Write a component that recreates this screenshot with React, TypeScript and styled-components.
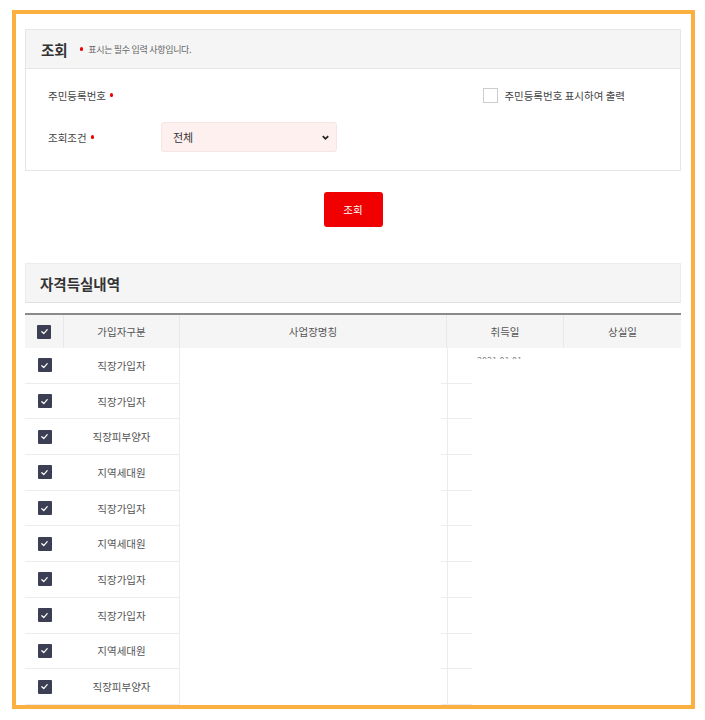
import styled, { createGlobalStyle } from 'styled-components';

const GlobalStyle = createGlobalStyle`
	html, body {
		margin: 0;
		padding: 0;
		background: #fff;
		font-family: "Noto Sans CJK KR", "Noto Sans", sans-serif;
		color: #333;
	}
`

const Frame = styled.div`
	box-sizing: border-box;
	margin: 10px 0 0 12px;
	width: 683px;
	height: 699px;
	border: 4px solid #fbb040;
	padding: 15px 10px 0 9px;
	overflow: hidden;
	background: #fff;
`

const Panel = styled.div`
	border: 1px solid #e6e6e6;
`

const PanelHead = styled.div`
	display: flex;
	align-items: center;
	height: 38px;
	padding: 0 15px;
	background: #f5f5f5;
	border-bottom: 1px solid #e6e6e6;
	gap: 12px;
`

const Title = styled.h2`
	margin: 0;
	font-size: 14.5px;
	font-weight: 700;
	color: #333;
`

const Note = styled.span`
	display: flex;
	align-items: center;
	gap: 5px;
	font-size: 9px;
	color: #666;
	letter-spacing: -0.3px;
`

const Dot = styled.i`
	display: inline-block;
	width: 3.5px;
	height: 3.5px;
	border-radius: 50%;
	background: #e00;
`

const PanelBody = styled.div`
	padding: 11px 22px 18px;
	display: flex;
	flex-direction: column;
	gap: 12px;
`

const FieldRow = styled.div`
	display: flex;
	align-items: center;
	min-height: 30px;
`

const Label = styled.label`
	display: flex;
	align-items: center;
	gap: 4px;
	width: 113px;
	font-size: 10.5px;
	color: #444;
`

const Spacer = styled.div`
	flex: 1;
`

const CheckLabel = styled.label`
	display: flex;
	align-items: center;
	gap: 6px;
	margin-right: 33px;
	font-size: 10.5px;
	color: #444;
`

const EmptyBox = styled.span`
	display: inline-block;
	width: 13px;
	height: 13px;
	border: 1px solid #ccc;
	background: #fff;
`

const Select = styled.div`
	box-sizing: border-box;
	display: flex;
	align-items: center;
	justify-content: space-between;
	width: 176px;
	height: 30px;
	padding: 0 6px 0 11px;
	background: #fff0f0;
	border: 1px solid #f7e4e4;
	border-radius: 3px;
	font-size: 11px;
	color: #333;
`

const ButtonBar = styled.div`
	display: flex;
	justify-content: center;
	padding: 21px 0 36px;
`

const Red = styled.button`
	width: 59px;
	height: 35px;
	border: none;
	border-radius: 3px;
	background: #f00000;
	color: #fff;
	font-family: inherit;
	font-size: 10.5px;
	cursor: pointer;
`

const SectionHead = styled.div`
	display: flex;
	align-items: center;
	height: 38px;
	padding: 0 14px;
	background: #f5f5f5;
	border: 1px solid #ececec;
	border-bottom-color: #e0e0e0;
`

const Grid = styled.div`
	margin-top: 10px;
	border-top: 2px solid #8a8a8a;
	display: grid;
	grid-template-columns: 39px 116px 267px 117px 117px;
`

const HeadCell = styled.div<{ last?: boolean }>`
	display: flex;
	align-items: center;
	justify-content: center;
	height: 33px;
	background: #f5f5f5;
	border-right: ${({ last }) => (last ? 'none' : '1px solid #e8e8e8')};
	font-size: 10.5px;
	color: #555;
`

const Cell = styled.div<{ line?: boolean }>`
	box-sizing: border-box;
	display: flex;
	align-items: center;
	justify-content: center;
	height: 35.7px;
	border-bottom: 1px solid #ececec;
	border-right: ${({ line }) => (line ? '1px solid #ececec' : 'none')};
	font-size: 10.5px;
	color: #555;
`

const Hidden = styled.div`
	position: relative;
	height: 35.7px;
	background: #fff;
`

const Stub = styled.div`
	position: absolute;
	left: -6px;
	bottom: 0;
	width: 31px;
	height: 100%;
	box-sizing: border-box;
	border-bottom: 1px solid #ececec;
	&::before {
		content: '';
		position: absolute;
		left: 6px;
		top: 0;
		bottom: 0;
		border-left: 1px solid #ececec;
	}
`

const Partial = styled.div`
	position: absolute;
	left: 30px;
	top: 6px;
	height: 5px;
	overflow: hidden;
	font-size: 9px;
	color: #888;
	line-height: 14px;
`

const Check = styled.span`
	display: inline-flex;
	align-items: center;
	justify-content: center;
	width: 14px;
	height: 14px;
	background: #3c3f53;
	border-radius: 1px;
`

const Tick = () => (
	<Check>
		<svg width="9" height="9" viewBox="0 0 10 10">
			<path d="M2 5.2 L4.2 7.3 L8 3" fill="none" stroke="#fff" strokeWidth="1.4" strokeLinecap="round" strokeLinejoin="round" />
		</svg>
	</Check>
)

const Chevron = () => (
	<svg width="9" height="9" viewBox="0 0 10 10">
		<path d="M2 3.5 L5 6.5 L8 3.5" fill="none" stroke="#222" strokeWidth="2" />
	</svg>
)

const rows = ['직장가입자', '직장가입자', '직장피부양자', '지역세대원', '직장가입자', '지역세대원', '직장가입자', '직장가입자', '지역세대원', '직장피부양자'];

const App = () => {
	return (
		<>
			<GlobalStyle />
			<Frame>
				<Panel>
					<PanelHead>
						<Title>조회</Title>
						<Note><Dot />표시는 필수 입력 사항입니다.</Note>
					</PanelHead>
					<PanelBody>
						<FieldRow>
							<Label>주민등록번호 <Dot /></Label>
							<Spacer />
							<CheckLabel><EmptyBox />주민등록번호 표시하여 출력</CheckLabel>
						</FieldRow>
						<FieldRow>
							<Label>조회조건 <Dot /></Label>
							<Select>전체<Chevron /></Select>
						</FieldRow>
					</PanelBody>
				</Panel>
				<ButtonBar>
					<Red>조회</Red>
				</ButtonBar>
				<SectionHead>
					<Title>자격득실내역</Title>
				</SectionHead>
				<Grid>
					<HeadCell><Tick /></HeadCell>
					<HeadCell>가입자구분</HeadCell>
					<HeadCell>사업장명칭</HeadCell>
					<HeadCell>취득일</HeadCell>
					<HeadCell last>상실일</HeadCell>
					{rows.map((type, i) => (
						<>
							<Cell key={`c${i}`}><Tick /></Cell>
							<Cell key={`t${i}`} line>{type}</Cell>
							<Hidden key={`n${i}`} />
							<Hidden key={`d${i}`}>
								<Stub />
								{i === 0 && <Partial>2021.01.01</Partial>}
							</Hidden>
							<Hidden key={`l${i}`} />
						</>
					))}
				</Grid>
			</Frame>
		</>
	);
}

export default App;
